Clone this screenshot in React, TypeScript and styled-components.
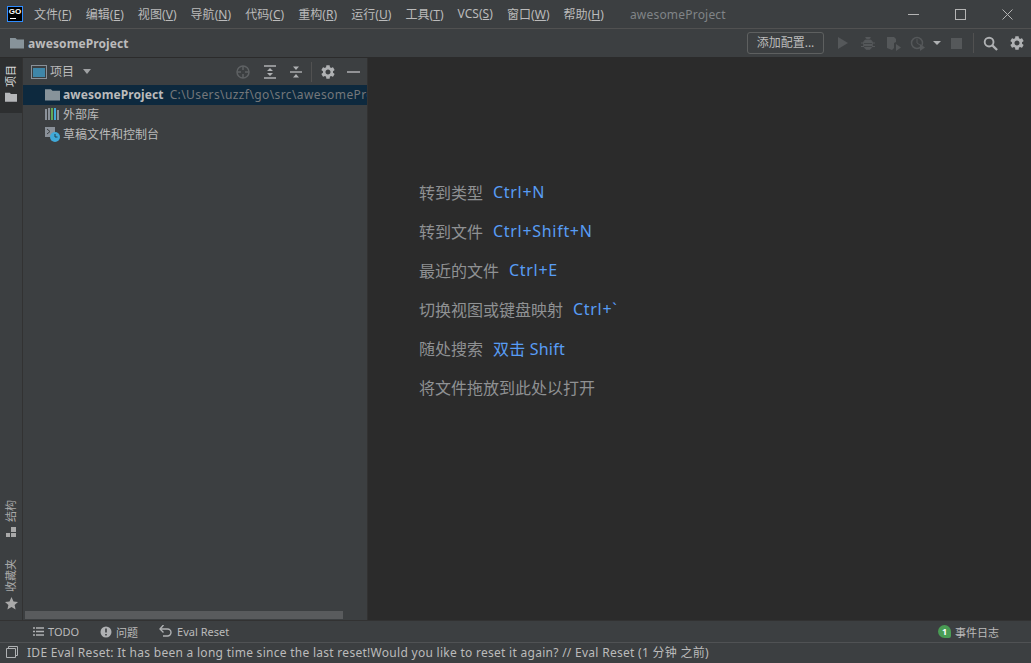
import React from "react";
import styled, { createGlobalStyle } from "styled-components";

const GlobalStyle = createGlobalStyle`
  html, body { margin: 0; padding: 0; height: 100%; background: #3c3f41; }
  #root { height: 100%; }
  * { box-sizing: border-box; }
`;

const Window = styled.div`
  width: 1031px;
  height: 663px;
  display: flex;
  flex-direction: column;
  overflow: hidden;
  background: #3c3f41;
  color: #bbbbbb;
  font-family: "Noto Sans", "Noto Sans CJK SC", sans-serif;
  font-size: 12px;
  svg { flex: none; display: block; }
`;

const TitleBar = styled.div`
  height: 29px;
  flex: none;
  display: flex;
  align-items: center;
  border-bottom: 1px solid #515151;
`;

const Logo = styled.div`
  width: 16px;
  height: 16px;
  margin: 0 11px 0 7px;
  flex: none;
  background: #000;
  border: 1px solid #2f8cff;
  color: #fff;
  font-family: "Liberation Sans", sans-serif;
  font-size: 8px;
  font-weight: 700;
  line-height: 9px;
  text-align: center;
  position: relative;
  &::after {
    content: "";
    position: absolute;
    left: 2px;
    bottom: 2px;
    width: 6px;
    height: 1px;
    background: #fff;
  }
`;

const Menu = styled.div`
  display: flex;
  gap: 14px;
  font-size: 12px;
  letter-spacing: 0.05px;
  u { text-underline-offset: 1px; }
`;

const WindowTitle = styled.div`
  margin-left: 26px;
  color: #808487;
  font-size: 12px;
  letter-spacing: 0.2px;
  flex: 1;
`;

const WinButton = styled.div`
  width: 47px;
  height: 28px;
  display: flex;
  align-items: center;
  justify-content: center;
`;

const NavBar = styled.div`
  height: 29px;
  flex: none;
  display: flex;
  align-items: center;
  padding: 0 7px 0 10px;
  border-bottom: 1px solid #2b2b2b;
`;

const NavTitle = styled.span`
  margin-left: 4px;
  font-weight: 700;
  font-size: 12px;
  letter-spacing: 0.1px;
  flex: 1;
`;

const ConfigButton = styled.div`
  width: 77px;
  height: 22px;
  border: 1px solid #5e6060;
  border-radius: 3px;
  font-size: 12px;
  line-height: 20px;
  text-align: center;
  margin-right: 13px;
`;

const IconRow = styled.div`
  display: flex;
  align-items: center;
`;

const Slot = styled.span<{ $left: number }>`
  display: flex;
  margin-left: ${(p) => p.$left}px;
`;

const Divider = styled.div<{ $left: number }>`
  width: 1px;
  height: 20px;
  margin-left: ${(p) => p.$left}px;
  background: #515151;
`;

const Main = styled.div`
  flex: 1;
  min-height: 0;
  display: flex;
`;

const Stripe = styled.div`
  width: 23px;
  flex: none;
  display: flex;
  flex-direction: column;
  justify-content: space-between;
  border-right: 1px solid #323232;
`;

const StripeGroup = styled.div`
  display: flex;
  flex-direction: column;
  gap: 21px;
  padding-bottom: 10px;
  &:first-child { padding-bottom: 0; }
`;

const StripeItem = styled.div<{ $active?: boolean }>`
  width: 22px;
  display: flex;
  flex-direction: column;
  align-items: center;
  padding: ${(p) => (p.$active ? "7px 0 10px" : "0")};
  gap: ${(p) => (p.$active ? "4px" : "5px")};
  background: ${(p) => (p.$active ? "#2d2f30" : "transparent")};
  color: ${(p) => (p.$active ? "#d8d8d8" : "#a9a9a9")};
`;

const VerticalLabel = styled.span`
  writing-mode: vertical-rl;
  text-orientation: sideways;
  transform: rotate(180deg);
  font-size: 11px;
  line-height: 14px;
`;

const ProjectPanel = styled.div`
  width: 345px;
  flex: none;
  display: flex;
  flex-direction: column;
  border-right: 1px solid #323232;
  position: relative;
`;

const PanelHeader = styled.div`
  height: 27px;
  flex: none;
  display: flex;
  align-items: center;
  padding: 0 7px 0 8px;
`;

const PanelTitle = styled.span`
  margin: 0 0 2px 3px;
  font-size: 12px;
`;

const PanelCaret = styled.span`
  display: flex;
  margin: 0 auto 0 9px;
`;

const TreeRow = styled.div<{ $selected?: boolean }>`
  height: 20px;
  display: flex;
  align-items: center;
  gap: 3px;
  padding: 0 0 2px 22px;
  white-space: nowrap;
  overflow: hidden;
  background: ${(p) => (p.$selected ? "#0d293e" : "transparent")};
`;

const ProjectName = styled.span`
  font-weight: 700;
  font-size: 12px;
  letter-spacing: 0.1px;
`;

const ProjectPath = styled.span`
  margin-left: 3px;
  color: #74777a;
  font-size: 12px;
  letter-spacing: 0.4px;
`;

const ScrollThumb = styled.div`
  position: absolute;
  left: 2px;
  bottom: 1px;
  width: 318px;
  height: 8px;
  background: #595b5d;
`;

const Editor = styled.div`
  flex: 1;
  background: #2b2b2b;
  display: flex;
  flex-direction: column;
  padding: 114px 0 0 51px;
`;

const Hint = styled.div`
  height: 39px;
  display: flex;
  align-items: center;
  gap: 10px;
  font-size: 16px;
  color: #8f9193;
`;

const Shortcut = styled.span<{ $tight?: boolean }>`
  color: #589df6;
  letter-spacing: ${(p) => (p.$tight ? "0.2px" : "0.7px")};
`;

const ToolBar = styled.div`
  height: 22px;
  flex: none;
  display: flex;
  align-items: center;
  padding-left: 33px;
  border-top: 1px solid #323232;
  font-size: 11px;
`;

const ToolItem = styled.div`
  display: flex;
  align-items: center;
  gap: 4px;
  margin-right: 21px;
`;

const EventLog = styled(ToolItem)`
  margin-left: auto;
  margin-right: 32px;
`;

const Badge = styled.span`
  width: 13px;
  height: 13px;
  border-radius: 50% 50% 2px 50%;
  background: #499c54;
  color: #fff;
  font-size: 9px;
  font-weight: 700;
  line-height: 13px;
  text-align: center;
`;

const StatusBar = styled.div`
  height: 21px;
  flex: none;
  display: flex;
  align-items: center;
  gap: 9px;
  padding: 0 0 2px 6px;
  border-top: 1px solid #505254;
  font-size: 12px;
  letter-spacing: 0.28px;
  white-space: nowrap;
`;

const Folder = ({ size = 14, color = "#87939a" }: { size?: number; color?: string }) => (
  <svg width={size} height={size} viewBox="0 0 14 14">
    <path d="M0 2h5.500l1.500 1.500h7V12.500H0z" fill={color} />
  </svg>
);

const Gear = ({ color = "#afb1b3" }: { color?: string }) => (
  <svg width="14" height="14" viewBox="2 2 20 20">
    <path
      fill={color}
      d="M19.140 12.940c.04-.3.06-.61.06-.94 0-.32-.02-.64-.07-.94l2.030-1.580c.18-.14.23-.41.12-.61l-1.920-3.320c-.12-.22-.37-.29-.59-.22l-2.390.96c-.5-.38-1.030-.7-1.620-.94l-.36-2.540c-.04-.24-.24-.41-.48-.41h-3.840c-.24 0-.43.17-.47.41l-.36 2.540c-.59.24-1.130.57-1.620.94l-2.390-.96c-.22-.08-.47 0-.59.22L2.740 8.870c-.12.21-.08.47.12.61l2.030 1.580c-.05.3-.09.63-.09.94s.02.64.07.94l-2.030 1.580c-.18.14-.23.41-.12.61l1.920 3.320c.12.22.37.29.59.22l2.390-.96c.5.38 1.030.7 1.620.94l.36 2.540c.05.24.24.41.48.41h3.840c.24 0 .44-.17.47-.41l.36-2.540c.59-.24 1.130-.56 1.620-.94l2.390.96c.22.08.47 0 .59-.22l1.920-3.320c.12-.22.07-.47-.12-.61l-2.010-1.580zM12 15.600c-1.980 0-3.600-1.620-3.600-3.600s1.620-3.600 3.600-3.600 3.600 1.620 3.600 3.600-1.620 3.600-3.600 3.600z"
    />
  </svg>
);

const menuItems: [string, string][] = [
  ["文件", "F"],
  ["编辑", "E"],
  ["视图", "V"],
  ["导航", "N"],
  ["代码", "C"],
  ["重构", "R"],
  ["运行", "U"],
  ["工具", "T"],
  ["VCS", "S"],
  ["窗口", "W"],
  ["帮助", "H"],
];

const hints: [string, string][] = [
  ["转到类型", "Ctrl+N"],
  ["转到文件", "Ctrl+Shift+N"],
  ["最近的文件", "Ctrl+E"],
  ["切换视图或键盘映射", "Ctrl+`"],
  ["随处搜索", "双击 Shift"],
  ["将文件拖放到此处以打开", ""],
];

export default function App() {
  return (
    <Window>
      <GlobalStyle />
      <TitleBar>
        <Logo>GO</Logo>
        <Menu>
          {menuItems.map(([label, key]) => (
            <span key={key}>
              {label}(<u>{key}</u>)
            </span>
          ))}
        </Menu>
        <WindowTitle>awesomeProject</WindowTitle>
        <WinButton>
          <svg width="11" height="11" viewBox="0 0 11 11">
            <path d="M0 5.500h11" stroke="#b4b4b4" />
          </svg>
        </WinButton>
        <WinButton>
          <svg width="11" height="11" viewBox="0 0 11 11">
            <rect x=".5" y=".5" width="10" height="10" fill="none" stroke="#b4b4b4" />
          </svg>
        </WinButton>
        <WinButton>
          <svg width="11" height="11" viewBox="0 0 11 11">
            <path d="M.5.500l10 10M10.500.500l-10 10" stroke="#b4b4b4" />
          </svg>
        </WinButton>
      </TitleBar>

      <NavBar>
        <Folder />
        <NavTitle>awesomeProject</NavTitle>
        <ConfigButton>添加配置...</ConfigButton>
        <IconRow>
          <svg width="12" height="14" viewBox="0 0 12 14">
            <path d="M1 1l10 6-10 6z" fill="#55585a" />
          </svg>
          <Slot $left={12}>
            <svg width="14" height="14" viewBox="0 0 14 14">
              <path d="M4.500 1l1 2h3l1-2M4 4h6l1.500 2v4.500L9 13.500H5l-2.500-3V6z" fill="#55585a" stroke="#55585a" strokeWidth=".6" />
              <path d="M0 7h14M0 10.500h14" stroke="#55585a" />
              <path d="M3 7.500h8M3 10.500h8" stroke="#3c3f41" strokeWidth=".8" />
            </svg>
          </Slot>
          <Slot $left={11}>
            <svg width="16" height="15" viewBox="0 0 16 15">
              <path d="M1 1h7l2 2v3L8 7v5l-2 2-5-2z" fill="#55585a" />
              <path d="M10 8l5 3.500-5 3.500z" fill="#55585a" />
            </svg>
          </Slot>
          <Slot $left={8}>
            <svg width="32" height="15" viewBox="0 0 32 15">
              <circle cx="7" cy="7" r="5.500" fill="none" stroke="#55585a" strokeWidth="1.500" />
              <path d="M7 3v4l3 2" fill="none" stroke="#55585a" />
              <path d="M10 8l5 3.500-5 3.500z" fill="#55585a" />
              <path d="M23 5h8l-4 4z" fill="#afb1b3" />
            </svg>
          </Slot>
          <Slot $left={9}>
            <svg width="11" height="11" viewBox="0 0 11 11">
              <rect width="11" height="11" fill="#55585a" />
            </svg>
          </Slot>
          <Divider $left={11} />
          <Slot $left={9}>
            <svg width="15" height="15" viewBox="0 0 16 16">
              <circle cx="6.500" cy="6.500" r="4.700" fill="none" stroke="#afb1b3" strokeWidth="2" />
              <path d="M10 10l5 5" stroke="#afb1b3" strokeWidth="2.400" />
            </svg>
          </Slot>
          <Slot $left={12}>
            <Gear />
          </Slot>
        </IconRow>
      </NavBar>

      <Main>
        <Stripe>
          <StripeGroup>
            <StripeItem $active>
              <VerticalLabel>项目</VerticalLabel>
              <Folder size={12} color="#b5b7b9" />
            </StripeItem>
          </StripeGroup>
          <StripeGroup>
            <StripeItem>
              <VerticalLabel>结构</VerticalLabel>
              <svg width="11" height="11" viewBox="0 0 11 11">
                <path d="M5 0h5v5H5zM0 6h4v4H0zM5 6h5v4H5z" fill="#a9a9a9" />
              </svg>
            </StripeItem>
            <StripeItem>
              <VerticalLabel>收藏夹</VerticalLabel>
              <svg width="13" height="13" viewBox="0 0 13 13">
                <path d="M6.500 0l2 4.400 4.500.5-3.400 3 1 4.600-4.100-2.400-4.100 2.400 1-4.600L0 4.900l4.500-.5z" fill="#a9a9a9" />
              </svg>
            </StripeItem>
          </StripeGroup>
        </Stripe>

        <ProjectPanel>
          <PanelHeader>
            <svg width="16" height="14" viewBox="0 0 16 14">
              <rect x=".5" y=".5" width="15" height="13" fill="none" stroke="#8a9199" />
              <rect x="2" y="3" width="12" height="9" fill="#3f86a8" />
            </svg>
            <PanelTitle>项目</PanelTitle>
            <PanelCaret>
              <svg width="8" height="5" viewBox="0 0 8 5">
                <path d="M0 0h8L4 5z" fill="#a0a2a4" />
              </svg>
            </PanelCaret>
            <svg width="14" height="14" viewBox="0 0 14 14">
              <circle cx="7" cy="7" r="6" fill="none" stroke="#5e6163" strokeWidth="1.500" />
              <path d="M7 1v4M7 9v4M1 7h4M9 7h4" stroke="#5e6163" strokeWidth="1.500" />
            </svg>
            <Slot $left={13}>
              <svg width="14" height="14" viewBox="0 0 14 14">
                <path d="M1 1h12M1 13h12" stroke="#afb1b3" strokeWidth="1.400" />
                <path d="M7 3l3 3H4zM7 11l3-3H4z" fill="#afb1b3" />
              </svg>
            </Slot>
            <Slot $left={12}>
              <svg width="14" height="14" viewBox="0 0 14 14">
                <path d="M1 7h12" stroke="#afb1b3" strokeWidth="1.400" />
                <path d="M7 5l3-3.500H4zM7 9l3 3.500H4z" fill="#afb1b3" />
              </svg>
            </Slot>
            <Divider $left={8} />
            <Slot $left={9}>
              <Gear />
            </Slot>
            <Slot $left={12}>
              <svg width="13" height="14" viewBox="0 0 13 14">
                <path d="M0 7h13" stroke="#afb1b3" strokeWidth="1.500" />
              </svg>
            </Slot>
          </PanelHeader>
          <TreeRow $selected>
            <Folder size={15} />
            <ProjectName>awesomeProject</ProjectName>
            <ProjectPath>C:\Users\uzzf\go\src\awesomeProject</ProjectPath>
          </TreeRow>
          <TreeRow>
            <svg width="15" height="12" viewBox="0 0 15 12">
              <rect x="0" y="1" width="2" height="11" fill="#8a9199" />
              <rect x="3" y="0" width="2" height="12" fill="#8a9199" />
              <rect x="6" y="0" width="2" height="12" fill="#62a855" />
              <rect x="9" y="0" width="2" height="12" fill="#40a9d8" />
              <rect x="12" y="2" width="2" height="10" fill="#8a9199" />
            </svg>
            <span>外部库</span>
          </TreeRow>
          <TreeRow>
            <svg width="15" height="15" viewBox="0 0 15 15">
              <rect x="0" y="0" width="10" height="10" fill="#8a9199" />
              <path d="M2 2l3 2.500-3 2.500" fill="none" stroke="#3c3f41" />
              <circle cx="10" cy="10" r="5" fill="#40a9d8" />
              <path d="M10 7v3h2.500" fill="none" stroke="#23404d" />
            </svg>
            <span>草稿文件和控制台</span>
          </TreeRow>
          <ScrollThumb />
        </ProjectPanel>

        <Editor>
          {hints.map(([text, keys]) => (
            <Hint key={text}>
              <span>{text}</span>
              {keys && <Shortcut $tight={keys.startsWith("双击")}>{keys}</Shortcut>}
            </Hint>
          ))}
        </Editor>
      </Main>

      <ToolBar>
        <ToolItem>
          <svg width="11" height="9" viewBox="0 0 11 9">
            <path d="M0 1h2M3 1h8M0 4.500h2M3 4.500h8M0 8h2M3 8h8" stroke="#afb1b3" strokeWidth="1.400" />
          </svg>
          TODO
        </ToolItem>
        <ToolItem>
          <svg width="12" height="12" viewBox="0 0 12 12">
            <circle cx="6" cy="6" r="5.500" fill="#afb1b3" />
            <path d="M6 2.500v4M6 8v1.500" stroke="#3c3f41" strokeWidth="1.600" />
          </svg>
          问题
        </ToolItem>
        <ToolItem>
          <svg width="14" height="13" viewBox="0 0 14 13">
            <path d="M1 4h7.500a3.500 3.500 0 0 1 0 7H4" fill="none" stroke="#afb1b3" strokeWidth="1.400" />
            <path d="M4.500 0L1 4l3.500 3.500" fill="none" stroke="#afb1b3" strokeWidth="1.400" />
          </svg>
          Eval Reset
        </ToolItem>
        <EventLog>
          <Badge>1</Badge>
          事件日志
        </EventLog>
      </ToolBar>

      <StatusBar>
        <svg width="12" height="12" viewBox="0 0 12 12">
          <path d="M2.500 2.500V.5h9v9h-2M.5 2.500h9v9h-9z" fill="none" stroke="#afb1b3" />
        </svg>
        IDE Eval Reset: It has been a long time since the last reset!Would you like to reset it again? // Eval Reset (1 分钟 之前)
      </StatusBar>
    </Window>
  );
}
